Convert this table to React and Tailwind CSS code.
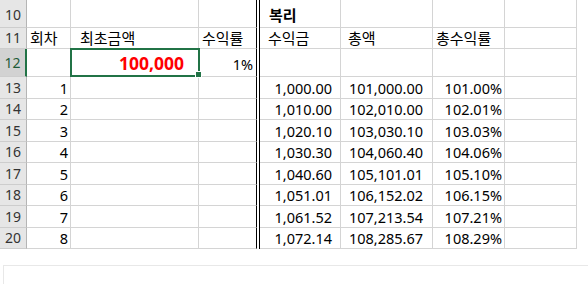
import React from "react";

const rows = [
  { n: 13, k: "1", gain: "1,000.00", total: "101,000.00", rate: "101.00%", h: "h-[22px]" },
  { n: 14, k: "2", gain: "1,010.00", total: "102,010.00", rate: "102.01%", h: "h-[21px]" },
  { n: 15, k: "3", gain: "1,020.10", total: "103,030.10", rate: "103.03%", h: "h-[22px]" },
  { n: 16, k: "4", gain: "1,030.30", total: "104,060.40", rate: "104.06%", h: "h-[21px]" },
  { n: 17, k: "5", gain: "1,040.60", total: "105,101.01", rate: "105.10%", h: "h-[22px]" },
  { n: 18, k: "6", gain: "1,051.01", total: "106,152.02", rate: "106.15%", h: "h-[21px]" },
  { n: 19, k: "7", gain: "1,061.52", total: "107,213.54", rate: "107.21%", h: "h-[22px]" },
  { n: 20, k: "8", gain: "1,072.14", total: "108,285.67", rate: "108.29%", h: "h-[21px]" },
];

const cell = "shrink-0 h-full flex border-b border-r border-[#d4d4d4]";
const num = "items-center justify-end text-[14.5px]";
const head = "shrink-0 h-full w-[27px] flex justify-center bg-[#e6e6e6] border-b border-b-[#cdcdcd] border-r border-r-[#b5b5b5] text-[#333] text-[14px]";
const gapCol = "shrink-0 h-full w-[3px] bg-white border-r border-black";

function Row({ h, children }) {
  return <div className={`flex items-center ${h}`}>{children}</div>;
}

export default function App() {
  return (
    <div className="w-[588px] h-[284px] overflow-hidden bg-white text-[15px] leading-[20px] text-black font-['Noto_Sans','Noto_Sans_CJK_KR',sans-serif]">
      {/* row 10 */}
      <Row h="h-[28px]">
        <div className={`${head} items-end pb-[2px]`}>10</div>
        <div className={`${cell} w-[44px]`} />
        <div className={`${cell} w-[128px]`} />
        <div className={`${cell} w-[58px] border-r-black`} />
        <div className={gapCol} />
        <div className={`${cell} w-[81px] items-end pb-[2px] pl-[9px] font-bold`}>복리</div>
        <div className={`${cell} w-[92px]`} />
        <div className={`${cell} w-[72px]`} />
        <div className={`${cell} w-[72px]`} />
      </Row>

      {/* row 11 */}
      <Row h="h-[21px]">
        <div className={`${head} items-end`}>11</div>
        <div className={`${cell} w-[44px] items-end pl-[3px]`}>회차</div>
        <div className={`${cell} w-[128px] items-end pl-[9px]`}>최초금액</div>
        <div className={`${cell} w-[58px] border-r-black items-end pl-[3px]`}>수익률</div>
        <div className={gapCol} />
        <div className={`${cell} w-[81px] items-end pl-[8px]`}>수익금</div>
        <div className={`${cell} w-[92px] items-end pl-[7px]`}>총액</div>
        <div className={`${cell} w-[72px] items-end pl-[3px]`}>총수익률</div>
        <div className={`${cell} w-[72px]`} />
      </Row>

      {/* row 12 */}
      <Row h="h-[28px]">
        <div className="shrink-0 h-full w-[27px] flex items-end justify-center pb-[3px] bg-[#d2d2d2] border-b border-b-[#cdcdcd] border-r-2 border-r-[#217346] text-[#1e5b38] text-[14px]">12</div>
        <div className={`${cell} w-[44px]`} />
        <div className={`${cell} w-[128px] relative items-end justify-end pr-[14px] pb-[1px] text-[17.5px] leading-[24px] font-bold text-[#ff0000]`}>
          100,000
          <div className="absolute -left-[1px] -top-[1px] -right-[2px] -bottom-[1px] border-2 border-[#217346] pointer-events-none" />
          <div className="absolute z-10 -right-[4px] -bottom-[2px] w-[7px] h-[7px] bg-[#217346] border border-white" />
        </div>
        <div className={`${cell} w-[58px] border-r-black items-end justify-end pr-[3px] pb-[2px] text-[14.5px]`}>1%</div>
        <div className={gapCol} />
        <div className={`${cell} w-[81px]`} />
        <div className={`${cell} w-[92px]`} />
        <div className={`${cell} w-[72px]`} />
        <div className={`${cell} w-[72px]`} />
      </Row>

      {rows.map((r) => (
        <Row key={r.n} h={r.h}>
          <div className={`${head} items-center`}>{r.n}</div>
          <div className={`${cell} w-[44px] ${num} pr-[2px]`}>{r.k}</div>
          <div className={`${cell} w-[128px]`} />
          <div className={`${cell} w-[58px] border-r-black`} />
          <div className={gapCol} />
          <div className={`${cell} w-[81px] ${num} pr-[8px]`}>{r.gain}</div>
          <div className={`${cell} w-[92px] ${num} pr-[9px]`}>{r.total}</div>
          <div className={`${cell} w-[72px] ${num} pr-[2px]`}>{r.rate}</div>
          <div className={`${cell} w-[72px]`} />
        </Row>
      ))}

      {/* faint frame below the grid */}
      <div className="ml-[3px] mt-[16px] h-[19px] border-l border-[#e8e8e8]">
        <div className="mt-[9px] border-t border-[#e8e8e8]" />
      </div>
    </div>
  );
}
